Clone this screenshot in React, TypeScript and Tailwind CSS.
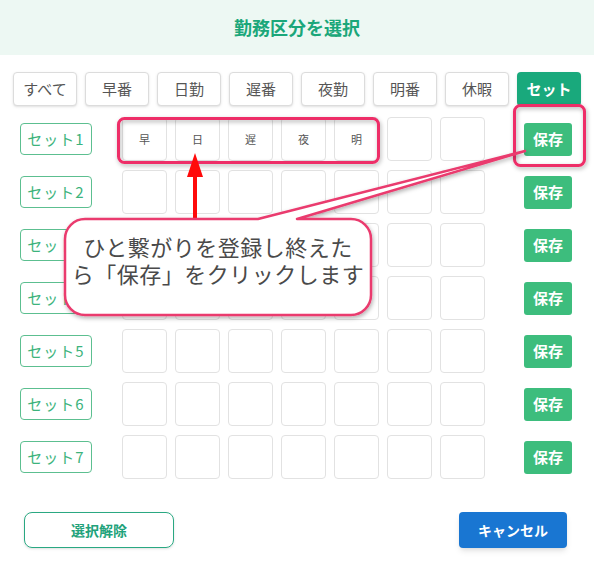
const tabs = ['すべて', '早番', '日勤', '遅番', '夜勤', '明番', '休暇', 'セット']
const firstRow = ['早', '日', '遅', '夜', '明', '', '']
const rows = [1, 2, 3, 4, 5, 6, 7]

function Overlay() {
  return (
    <svg
      className="absolute inset-0 pointer-events-none"
      width={594}
      height={567}
      viewBox="0 0 594 567"
    >
      <defs>
        <filter id="sh" x="-20%" y="-20%" width="140%" height="140%">
          <feDropShadow dx="1" dy="2" stdDeviation="2" floodColor="#000" floodOpacity="0.3" />
        </filter>
      </defs>
      {/* highlight boxes */}
      <rect x={118.5} y={118.5} width={260} height={44} rx={6} fill="none" stroke="#ee2f68" strokeWidth={3} filter="url(#sh)" />
      <rect x={514.5} y={105.5} width={70} height={60} rx={6} fill="none" stroke="#ee2f68" strokeWidth={3} filter="url(#sh)" />
      {/* arrow */}
      <line x1={195} y1={222} x2={195} y2={172} stroke="#ff0a0a" strokeWidth={4} />
      <polygon points="187,177 195,153 203,177" fill="#ff0a0a" />
      {/* callout */}
      <path
        d="M85,219 L258,219 L525,151 L297,219 L351,219 A20,20 0 0 1 371,239 L371,295 A20,20 0 0 1 351,315 L85,315 A20,20 0 0 1 65,295 L65,239 A20,20 0 0 1 85,219 Z"
        fill="#fff"
        stroke="#ea3a6e"
        strokeWidth={2.5}
        strokeLinejoin="round"
        filter="url(#sh)"
      />
    </svg>
  )
}

export default function App() {
  return (
    <div
      className="relative w-[594px] h-[567px] bg-white overflow-hidden"
      style={{ fontFamily: '"Noto Sans CJK JP", "Noto Sans", sans-serif' }}
    >
      <div className="h-[55px] bg-[#edf8f3] flex items-center justify-center">
        <h1 className="text-[18px] font-bold text-[#1ba77a]">勤務区分を選択</h1>
      </div>

      <div className="flex justify-between px-[13px] mt-[17px]">
        {tabs.map((tab) =>
          tab === 'セット' ? (
            <button key={tab} className="w-16 h-[34px] rounded bg-[#19a97c] text-white text-[15px] font-bold shadow-sm">
              {tab}
            </button>
          ) : (
            <button key={tab} className="w-16 h-[34px] rounded border border-[#dcdcdc] bg-white text-[#555] text-[15px] shadow-sm">
              {tab}
            </button>
          )
        )}
      </div>

      <div className="flex flex-col gap-[9px] mt-[11px]">
        {rows.map((n) => (
          <div key={n} className="flex items-center h-[44px]">
            <button className="ml-5 w-[72px] h-8 rounded border border-[#5cbf90] text-[#3cb37c] text-[15px] tracking-[1px]">
              セット{n}
            </button>
            <div className="flex gap-2 ml-[30px]">
              {(n === 1 ? firstRow : ['', '', '', '', '', '', '']).map((c, i) => (
                <div
                  key={i}
                  className="w-[45px] h-[44px] rounded border border-[#e2e2e2] flex items-center justify-center text-[11px] text-[#555]"
                >
                  {c}
                </div>
              ))}
            </div>
            <button className="ml-[39px] w-12 h-[33px] rounded-[3px] bg-[#3dbd7d] text-white text-[15px] font-bold">
              保存
            </button>
          </div>
        ))}
      </div>

      <div className="flex justify-between items-center pl-6 pr-[27px] mt-[33px]">
        <button className="w-[150px] h-9 rounded-lg border border-[#2aa882] text-[#21a27a] text-[14px] font-bold shadow-sm">
          選択解除
        </button>
        <button className="w-[108px] h-9 rounded bg-[#1976d2] text-white text-[14px] font-bold shadow-md">
          キャンセル
        </button>
      </div>

      <Overlay />

      <div className="absolute left-[65px] top-[233px] w-[306px] text-center text-[22px] leading-[27px] text-[#4a4a4a] tracking-[0.5px]">
        <div>ひと繋がりを登録し終えた</div>
        <div>ら「保存」をクリックします</div>
      </div>
    </div>
  )
}
